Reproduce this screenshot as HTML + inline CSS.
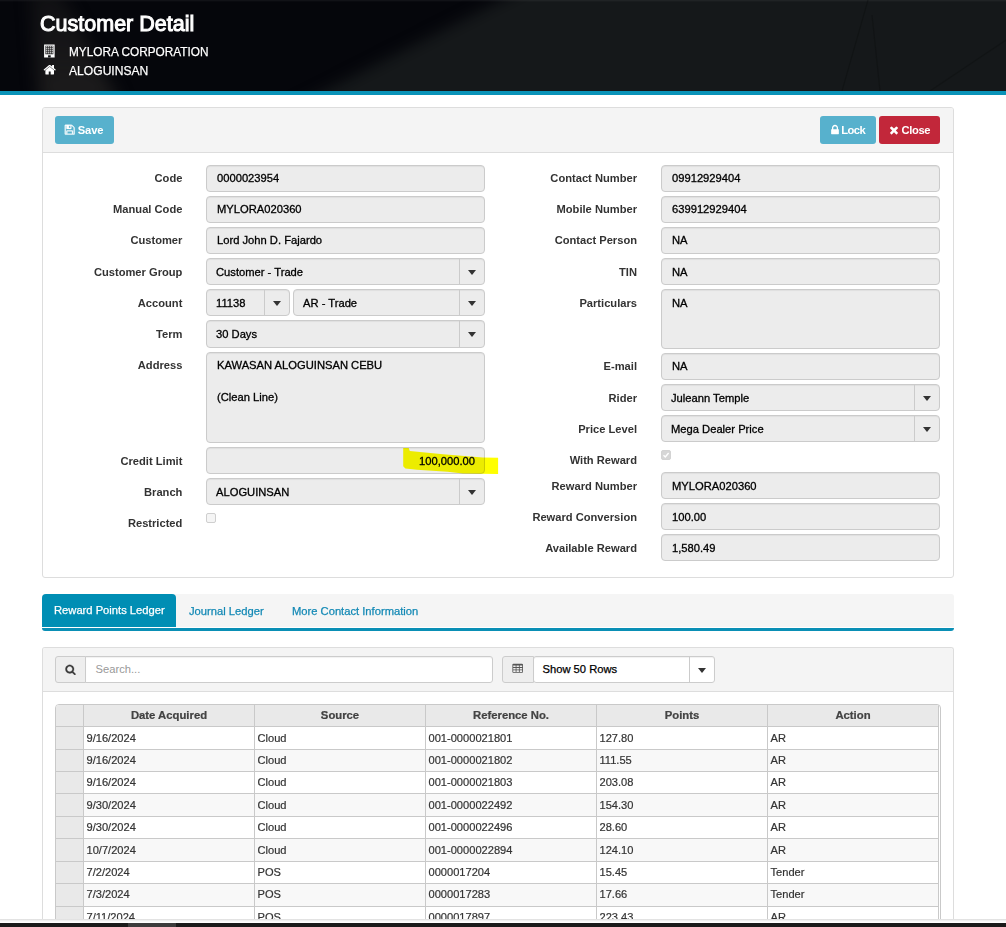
<!DOCTYPE html>
<html lang="en">
<head>
<meta charset="utf-8">
<title>Customer Detail</title>
<style>
*{box-sizing:border-box;margin:0;padding:0}
html,body{width:1006px;height:927px;overflow:hidden;background:#fff}
body{position:relative;font-family:"Liberation Sans",Arial,sans-serif;font-size:12px;color:#333;line-height:1}
.abs{position:absolute}
/* header */
#hdr{position:absolute;left:0;top:0;width:1006px;height:91px;background:#101214;overflow:hidden}
#hdrline{position:absolute;left:0;top:91px;width:1006px;height:4px;background:#0a93b8}
#hdr h1{position:absolute;left:40.4px;top:11.3px;font-size:22.3px;font-weight:normal;-webkit-text-stroke:1.05px #fff;color:#fff;white-space:nowrap;line-height:26px;transform:scaleX(0.965);transform-origin:0 0}
#hdr .sub{position:absolute;left:68px;font-size:13px;color:#fff;-webkit-text-stroke:0.25px #fff;white-space:nowrap;line-height:16px;transform:scaleX(0.916);transform-origin:0 0}
/* panels */
.panel{position:absolute;left:42px;width:912px;border:1px solid #ddd;border-radius:3px;background:#fff}
.phead{position:absolute;left:0;top:0;width:910px;background:#f4f4f4;border-bottom:1px solid #ddd;border-radius:2px 2px 0 0}
.btn{position:absolute;height:28px;border-radius:3px;color:#fff;font-weight:bold;font-size:11.2px;line-height:28px;white-space:nowrap}
/* form */
.lbl{position:absolute;font-weight:bold;font-size:11.15px;line-height:14px;text-align:right;white-space:nowrap;color:#333}
.inp{position:absolute;background:#ececec;border:1px solid #cbcbcb;border-radius:4px;font-size:11.2px;line-height:14px;color:#000;padding:5px 0 0 10px;white-space:nowrap;overflow:hidden;box-shadow:inset 0 1px 1px rgba(0,0,0,.06)}
.inp.cmb{padding-top:6px}
.inp{-webkit-text-stroke:0.3px #000}
.cmb .dd{position:absolute;right:0;top:0;bottom:0;width:25px;border-left:1px solid #cbcbcb}
.cmb .dd:after{content:"";position:absolute;left:8px;top:11px;border-left:4px solid transparent;border-right:4px solid transparent;border-top:5px solid #333}
.chk{position:absolute;width:10px;height:10px;border:1px solid #cfcfcf;border-radius:2px;background:#f5f5f5}

/* tabs */
#tabbar{position:absolute;left:42px;top:594px;width:912px;height:33px;background:#f5f5f5;border-radius:3px 3px 0 0}
#tabline{position:absolute;left:42px;top:628px;width:912px;height:3px;background:#0a8fb5;border-radius:0 0 3px 3px}
.tab{position:absolute;top:594px;height:33px;font-size:11.2px;line-height:14px;color:#1389b5;white-space:nowrap;-webkit-text-stroke:0.25px #1389b5}
.tab.act{left:42px;width:134px;background:#008eb4;border-radius:4px 4px 0 0;color:#fff}
/* toolbar */
.addon{position:absolute;background:#eee;border:1px solid #ccc;border-radius:3px 0 0 3px}
.tin{position:absolute;background:#fff;border:1px solid #ccc;border-radius:0 3px 3px 0;font-size:11.2px;line-height:14px;white-space:nowrap;box-shadow:inset 0 1px 1px rgba(0,0,0,.06)}
/* grid */
#grid{position:absolute;left:55px;top:704px;width:886px;height:230px;border:1px solid #c9c9c9;border-radius:4px 4px 0 0;background:#fff;overflow:hidden;font-size:11.1px}
.gr{position:absolute;left:0;width:883px;border-bottom:1px solid #c9c9c9;background:#fff}
.gr.alt{background:#f8f8f8}
.gr span{position:absolute;top:0;bottom:0;border-right:1px solid #c9c9c9;padding-left:2.5px;-webkit-text-stroke:0.2px #333;white-space:nowrap;overflow:hidden;color:#333}
.gr .rh{left:0;width:28px;background:#e9e9e9}
.gr .c1{left:28px;width:171px}.gr .c2{left:199px;width:171px}.gr .c3{left:370px;width:171px}.gr .c4{left:541px;width:171px}.gr .c5{left:712px;width:171px}
.gr.hd{background:#e9e9e9}
.gr.hd span{font-weight:bold;text-align:center;padding-left:0;color:#444;font-size:11.3px}
</style>
</head>
<body>
<!-- HEADER -->
<div id="hdr">
  <svg class="abs" style="left:0;top:0" width="1006" height="91" viewBox="0 0 1006 91" preserveAspectRatio="none"><defs><filter id="bl" color-interpolation-filters="sRGB" x="-20%" y="-50%" width="140%" height="200%"><feGaussianBlur stdDeviation="7"/></filter><filter id="bl2" color-interpolation-filters="sRGB" x="-50%" y="-50%" width="200%" height="200%"><feGaussianBlur stdDeviation="8"/></filter><linearGradient id="sg" x1="0" y1="0" x2="0" y2="1"><stop offset="0" stop-color="#1c1b1c" stop-opacity="0.45"/><stop offset="1" stop-color="#1e1d1d" stop-opacity="1"/></linearGradient></defs><rect width="1006" height="91" fill="#05060b"/><polygon points="541,-20 1100,-20 1100,120 267,120" fill="#15181a" filter="url(#bl)"/><rect x="0" y="0" width="1006" height="1" fill="#fff" opacity="0.05"/><rect x="0" y="1" width="1006" height="1" fill="#fff" opacity="0.02"/><path d="M842 91L868 0M880 91L872 15M1006 40L930 91" stroke="#0c0e10" stroke-width="1.2" fill="none" opacity="0.4"/><polygon points="30,-12 58,-12 120,103 40,103" fill="url(#sg)" filter="url(#bl2)"/></svg>
    <h1>Customer Detail</h1>
  <svg class="abs" style="left:43.2px;top:44.2px" width="13.2" height="14" viewBox="0 0 12 14" preserveAspectRatio="none"><path fill="#fff" fill-rule="evenodd" d="M1 0.5h9.6v13H1zM2.2 1.7v8.6h7.2V1.7z"/><path fill="#bbb" d="M2.6 2.1h1.3v1.4H2.6zM4.4 2.1h1.3v1.4H4.4zM6.2 2.1h1.3v1.4H6.2zM8 2.1h1.1v1.4H8zM2.6 4.1h1.3v1.4H2.6zM4.4 4.1h1.3v1.4H4.4zM6.2 4.1h1.3v1.4H6.2zM8 4.1h1.1v1.4H8zM2.6 6.1h1.3v1.4H2.6zM4.4 6.1h1.3v1.4H4.4zM6.2 6.1h1.3v1.4H6.2zM8 6.1h1.1v1.4H8zM2.6 8.1h1.3v1.4H2.6zM4.4 8.1h1.3v1.4H4.4zM6.2 8.1h1.3v1.4H6.2zM8 8.1h1.1v1.4H8z"/><path fill="#101216" d="M4.6 11.3h2.4v2.2H4.6z"/></svg>
  <svg class="abs" style="left:43.3px;top:63.3px" width="13.4" height="13.4" viewBox="0 0 1792 1792"><path fill="#fff" d="M1472 992v480q0 26-19 45t-45 19h-384v-384h-256v384h-384q-26 0-45-19t-19-45v-480q0-1 .5-3t.5-3l575-474 575 474q1 2 1 6zm223-69l-62 74q-8 9-21 11h-3q-13 0-21-7l-692-577-692 577q-12 8-24 7-13-2-21-11l-62-74q-8-10-7-23.5t11-21.5l719-599q32-26 76-26t76 26l244 204v-195q0-14 9-23t23-9h192q14 0 23 9t9 23v408l219 182q10 8 11 21.5t-7 23.5z"/></svg>
  <div class="sub" style="top:44px;left:68.5px;transform:scaleX(0.908)">MYLORA CORPORATION</div>
  <div class="sub" style="top:62.6px;left:68.5px;transform:scaleX(0.931)">ALOGUINSAN</div>
</div>
<div id="hdrline"></div>

<!-- PANEL 1 -->
<div class="panel" id="p1" style="top:107px;height:471px">
  <div class="phead" style="height:45px">
    <div class="btn" style="left:12px;top:8px;width:59px;background:#57b1cd"><svg class="abs" style="left:9.2px;top:8.2px" width="11.4" height="11.4" viewBox="0 0 1792 1792"><path fill="#fff" stroke="#fff" stroke-width="55" stroke-linejoin="round" d="M512 1536h768v-384h-768v384zm896 0h128v-896q0-14-10-38.500t-20-34.500l-281-281q-10-10-34-20t-39-10v416q0 40-28 68t-68 28h-576q-40 0-68-28t-28-68v-416h-128v1280h128v-416q0-40 28-68t68-28h832q40 0 68 28t28 68v416zm-384-928v-320q0-13-9.500-22.500t-22.500-9.500h-192q-13 0-22.500 9.500t-9.500 22.500v320q0 13 9.500 22.500t22.500 9.500h192q13 0 22.500-9.500t9.500-22.500zm640 32v928q0 40-28 68t-68 28h-1344q-40 0-68-28t-28-68v-1344q0-40 28-68t68-28h928q40 0 88 20t76 48l280 280q28 28 48 76t20 88z"/></svg><span class="abs" style="left:22.8px;top:0;letter-spacing:-0.15px">Save</span></div>
    <div class="btn" style="left:777px;top:8px;width:56px;background:#57b1cd"><svg class="abs" style="left:8.5px;top:8px" width="12" height="12" viewBox="0 0 1792 1792"><path fill="#fff" d="M640 768h512v-192q0-106-75-181t-181-75-181 75-75 181v192zm832 96v576q0 40-28 68t-68 28h-960q-40 0-68-28t-28-68v-576q0-40 28-68t68-28h32v-192q0-184 132-316t316-132 316 132 132 316v192h32q40 0 68 28t28 68z"/></svg><span class="abs" style="left:21.3px;top:0;letter-spacing:-0.55px">Lock</span></div>
    <div class="btn" style="left:836px;top:8px;width:61px;background:#c2273a"><svg class="abs" style="left:8.5px;top:8px" width="12" height="12" viewBox="0 0 1792 1792"><path fill="#fff" d="M1490 1322q0 40-28 68l-136 136q-28 28-68 28t-68-28l-294-294-294 294q-28 28-68 28t-68-28l-136-136q-28-28-28-68t28-68l294-294-294-294q-28-28-28-68t28-68l136-136q28-28 68-28t68 28l294 294 294-294q28-28 68-28t68 28l136 136q28 28 28 68t-28 68l-294 294 294 294q28 28 28 68z"/></svg><span class="abs" style="left:22.6px;top:0;letter-spacing:-0.4px">Close</span></div>
  </div>
</div>
<div id="form">
  <div class="lbl" style="left:62.4px;width:120px;top:171px">Code</div>
  <div class="inp" style="left:206px;top:165px;width:279px;height:27px">0000023954</div>
  <div class="lbl" style="left:62.4px;width:120px;top:202px">Manual Code</div>
  <div class="inp" style="left:206px;top:196px;width:279px;height:27px">MYLORA020360</div>
  <div class="lbl" style="left:62.4px;width:120px;top:233px">Customer</div>
  <div class="inp" style="left:206px;top:227px;width:279px;height:27px">Lord John D. Fajardo</div>
  <div class="lbl" style="left:62.4px;width:120px;top:265px">Customer Group</div>
  <div class="inp cmb" style="left:206px;top:258px;width:279px;height:27px;padding-left:9px">Customer - Trade<span class="dd"></span></div>
  <div class="lbl" style="left:62.4px;width:120px;top:296px">Account</div>
  <div class="inp cmb" style="left:206px;top:289px;width:84px;height:27px;padding-left:9px">11138<span class="dd"></span></div>
  <div class="inp cmb" style="left:293px;top:289px;width:192px;height:27px;padding-left:9px">AR - Trade<span class="dd"></span></div>
  <div class="lbl" style="left:62.4px;width:120px;top:327px">Term</div>
  <div class="inp cmb" style="left:206px;top:320px;width:279px;height:28px;padding-left:9px">30 Days<span class="dd"></span></div>
  <div class="lbl" style="left:62.4px;width:120px;top:358px">Address</div>
  <div class="inp" style="left:206px;top:352px;width:279px;height:91px;line-height:16px;padding-top:4px;white-space:normal">KAWASAN ALOGUINSAN CEBU<br><br>(Clean Line)</div>
  <div class="lbl" style="left:62.4px;width:120px;top:454px">Credit Limit</div>
  <div class="inp" style="left:206px;top:447px;width:279px;height:27px;text-align:right;padding-right:9px;padding-top:6px">100,000.00</div>
  <div class="lbl" style="left:62.4px;width:120px;top:485px">Branch</div>
  <div class="inp cmb" style="left:206px;top:478px;width:279px;height:27px;padding-left:9px">ALOGUINSAN<span class="dd"></span></div>
  <div class="lbl" style="left:62.4px;width:120px;top:516px">Restricted</div>
  <div class="chk" style="left:206px;top:513px"></div>

  <div class="lbl" style="left:497px;width:140px;top:171px">Contact Number</div>
  <div class="inp" style="left:661px;top:165px;width:279px;height:27px">09912929404</div>
  <div class="lbl" style="left:497px;width:140px;top:202px">Mobile Number</div>
  <div class="inp" style="left:661px;top:196px;width:279px;height:27px">639912929404</div>
  <div class="lbl" style="left:497px;width:140px;top:233px">Contact Person</div>
  <div class="inp" style="left:661px;top:227px;width:279px;height:27px">NA</div>
  <div class="lbl" style="left:497px;width:140px;top:265px">TIN</div>
  <div class="inp" style="left:661px;top:258px;width:279px;height:27px;padding-top:6px">NA</div>
  <div class="lbl" style="left:497px;width:140px;top:296px">Particulars</div>
  <div class="inp" style="left:661px;top:289px;width:279px;height:60px;padding-top:6px">NA</div>
  <div class="lbl" style="left:497px;width:140px;top:359px">E-mail</div>
  <div class="inp" style="left:661px;top:353px;width:279px;height:27px">NA</div>
  <div class="lbl" style="left:497px;width:140px;top:391px">Rider</div>
  <div class="inp cmb" style="left:661px;top:384px;width:279px;height:27px;padding-left:9px">Juleann Temple<span class="dd"></span></div>
  <div class="lbl" style="left:497px;width:140px;top:422px">Price Level</div>
  <div class="inp cmb" style="left:661px;top:415px;width:279px;height:27px;padding-left:9px">Mega Dealer Price<span class="dd"></span></div>
  <div class="lbl" style="left:497px;width:140px;top:453px">With Reward</div>
  <div class="chk" style="left:661px;top:450px;background:#d6d6d6;border-color:#d3d3d3"><svg class="abs" style="left:0;top:0" width="8" height="8" viewBox="0 0 8 8"><path d="M1.5 4.2 L3.3 6 L6.6 2" fill="none" stroke="#fff" stroke-width="1.4"/></svg></div>
  <div class="lbl" style="left:497px;width:140px;top:479px">Reward Number</div>
  <div class="inp" style="left:661px;top:472px;width:279px;height:27px;padding-top:6px">MYLORA020360</div>
  <div class="lbl" style="left:497px;width:140px;top:510px">Reward Conversion</div>
  <div class="inp" style="left:661px;top:503px;width:279px;height:27px;padding-top:6px">100.00</div>
  <div class="lbl" style="left:497px;width:140px;top:541px">Available Reward</div>
  <div class="inp" style="left:661px;top:534px;width:279px;height:27px;padding-top:6px">1,580.49</div>
  <svg class="abs" style="left:400px;top:445px;mix-blend-mode:multiply" width="102" height="32" viewBox="400 445 102 32"><polygon fill="#ffff00" points="403.2,447.9 408.7,447.9 409.8,450.9 443.1,454.2 482.5,457.5 498.1,457.8 498.1,473.9 462.8,473.4 447.5,471.7 416.9,469.7 405.4,468.6 403.2,466.2"/></svg>
</div>

<!-- TABS -->
<div id="tabs">
  <div id="tabbar"></div>
  <div class="tab act"><span class="abs" style="left:12px;top:9px;-webkit-text-stroke:0.25px #fff">Reward Points Ledger</span></div>
  <div class="tab" style="left:189px"><span class="abs" style="left:0;top:10px">Journal Ledger</span></div>
  <div class="tab" style="left:292px"><span class="abs" style="left:0;top:10px">More Contact Information</span></div>
  <div id="tabline"></div>
</div>

<!-- PANEL 2 -->
<div class="panel" id="p2" style="top:647px;height:290px;border-bottom:0;border-radius:3px 3px 0 0">
  <div class="phead" style="height:44px">
    <div class="addon" style="left:12px;top:8px;width:31px;height:27px"><svg class="abs" style="left:9.1px;top:6.8px" width="11" height="11" viewBox="0 0 1792 1792"><path fill="#3a3a3a" stroke="#3a3a3a" stroke-width="45" d="M1216 832q0-185-131.5-316.500t-316.500-131.500-316.500 131.500-131.500 316.500 131.500 316.500 316.500 131.500 316.500-131.500 131.500-316.500zm512 832q0 52-38 90t-90 38q-54 0-90-38l-343-342q-179 124-399 124-143 0-273.500-55.500t-225-150-150-225-55.500-273.500 55.500-273.500 150-225 225-150 273.500-55.500 273.500 55.500 225 150 150 225 55.500 273.500q0 220-124 399l343 343q37 37 37 90z"/></svg></div>
    <div class="tin" style="left:42px;top:8px;width:408px;height:27px;padding:5px 0 0 9.5px;color:#999">Search...</div>
    <div class="addon" style="left:459px;top:8px;width:32px;height:27px"><svg class="abs" style="left:9.2px;top:5.8px" width="11.4" height="11.4" viewBox="0 0 1792 1792"><path fill="#555" d="M576 1376v-192q0-14-9-23t-23-9h-320q-14 0-23 9t-9 23v192q0 14 9 23t23 9h320q14 0 23-9t9-23zm0-384v-192q0-14-9-23t-23-9h-320q-14 0-23 9t-9 23v192q0 14 9 23t23 9h320q14 0 23-9t9-23zm512 384v-192q0-14-9-23t-23-9h-320q-14 0-23 9t-9 23v192q0 14 9 23t23 9h320q14 0 23-9t9-23zm-512-768v-192q0-14-9-23t-23-9h-320q-14 0-23 9t-9 23v192q0 14 9 23t23 9h320q14 0 23-9t9-23zm512 384v-192q0-14-9-23t-23-9h-320q-14 0-23 9t-9 23v192q0 14 9 23t23 9h320q14 0 23-9t9-23zm512 384v-192q0-14-9-23t-23-9h-320q-14 0-23 9t-9 23v192q0 14 9 23t23 9h320q14 0 23-9t9-23zm-512-768v-192q0-14-9-23t-23-9h-320q-14 0-23 9t-9 23v192q0 14 9 23t23 9h320q14 0 23-9t9-23zm512 384v-192q0-14-9-23t-23-9h-320q-14 0-23 9t-9 23v192q0 14 9 23t23 9h320q14 0 23-9t9-23zm0-384v-192q0-14-9-23t-23-9h-320q-14 0-23 9t-9 23v192q0 14 9 23t23 9h320q14 0 23-9t9-23zm128-320v1088q0 66-47 113t-113 47h-1344q-66 0-113-47t-47-113v-1088q0-66 47-113t113-47h1344q66 0 113 47t47 113z"/></svg></div>
    <div class="tin cmb" style="left:490px;top:8px;width:182px;height:27px;border-radius:3px;padding:5px 0 0 8.5px;color:#000;-webkit-text-stroke:0.25px #000">Show 50 Rows<span class="dd"></span></div>
  </div>
</div>
<div id="grid">
  <div class="gr hd" style="top:0;height:22px;line-height:21px"><span class="rh"></span><span class="c1">Date Acquired</span><span class="c2">Source</span><span class="c3">Reference No.</span><span class="c4">Points</span><span class="c5">Action</span></div>
  <div class="gr" style="top:22px;height:23px;line-height:22px"><span class="rh"></span><span class="c1">9/16/2024</span><span class="c2">Cloud</span><span class="c3">001-0000021801</span><span class="c4">127.80</span><span class="c5">AR</span></div>
  <div class="gr alt" style="top:45px;height:22px;line-height:21px"><span class="rh"></span><span class="c1">9/16/2024</span><span class="c2">Cloud</span><span class="c3">001-0000021802</span><span class="c4">111.55</span><span class="c5">AR</span></div>
  <div class="gr" style="top:67px;height:22px;line-height:21px"><span class="rh"></span><span class="c1">9/16/2024</span><span class="c2">Cloud</span><span class="c3">001-0000021803</span><span class="c4">203.08</span><span class="c5">AR</span></div>
  <div class="gr alt" style="top:89px;height:23px;line-height:22px"><span class="rh"></span><span class="c1">9/30/2024</span><span class="c2">Cloud</span><span class="c3">001-0000022492</span><span class="c4">154.30</span><span class="c5">AR</span></div>
  <div class="gr" style="top:112px;height:22px;line-height:21px"><span class="rh"></span><span class="c1">9/30/2024</span><span class="c2">Cloud</span><span class="c3">001-0000022496</span><span class="c4">28.60</span><span class="c5">AR</span></div>
  <div class="gr alt" style="top:134px;height:23px;line-height:22px"><span class="rh"></span><span class="c1">10/7/2024</span><span class="c2">Cloud</span><span class="c3">001-0000022894</span><span class="c4">124.10</span><span class="c5">AR</span></div>
  <div class="gr" style="top:157px;height:22px;line-height:21px"><span class="rh"></span><span class="c1">7/2/2024</span><span class="c2">POS</span><span class="c3">0000017204</span><span class="c4">15.45</span><span class="c5">Tender</span></div>
  <div class="gr alt" style="top:179px;height:23px;line-height:20.5px"><span class="rh"></span><span class="c1">7/3/2024</span><span class="c2">POS</span><span class="c3">0000017283</span><span class="c4">17.66</span><span class="c5">Tender</span></div>
  <div class="gr" style="top:202px;height:22px;line-height:21px"><span class="rh"></span><span class="c1">7/11/2024</span><span class="c2">POS</span><span class="c3">0000017897</span><span class="c4">223.43</span><span class="c5">AR</span></div>
</div>

<!-- bottom bar -->
<div class="abs" style="left:0;top:919px;width:1006px;height:4px;background:linear-gradient(#dadada 0,#ebebeb 1px,#f5f5f5 2px,#fff 3px,#fff 4px)"></div>
<div class="abs" style="left:0;top:923px;width:1006px;height:4px;background:#1b1b1b"></div>
<div class="abs" style="left:128px;top:923px;width:48px;height:4px;background:#3c3c3c"></div>
</body>
</html>
